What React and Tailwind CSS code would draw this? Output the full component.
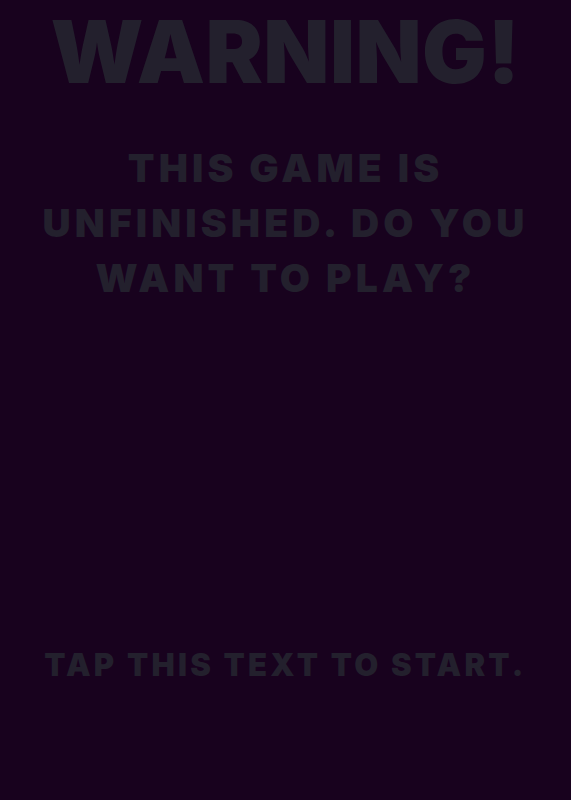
export default function App() {
  return (
    <div className="min-h-screen w-full bg-[#18021e] flex flex-col items-center text-[#23202d] font-['Inter',sans-serif] uppercase select-none">
      {/* Title */}
      <h1 className="mt-[2px] text-[86px] leading-[100px] font-black tracking-[0.005em]">
        Warning!
      </h1>

      {/* Question */}
      <p className="mt-[38px] text-center text-[39px] leading-[55px] font-black tracking-[0.105em] px-2">
        This game is
        <br />
        unfinished. Do you
        <br />
        want to play?
      </p>

      {/* Start */}
      <button className="mt-[340px] uppercase text-[31px] leading-[40px] font-black tracking-[0.105em]">
        Tap this text to start.
      </button>
    </div>
  );
}
